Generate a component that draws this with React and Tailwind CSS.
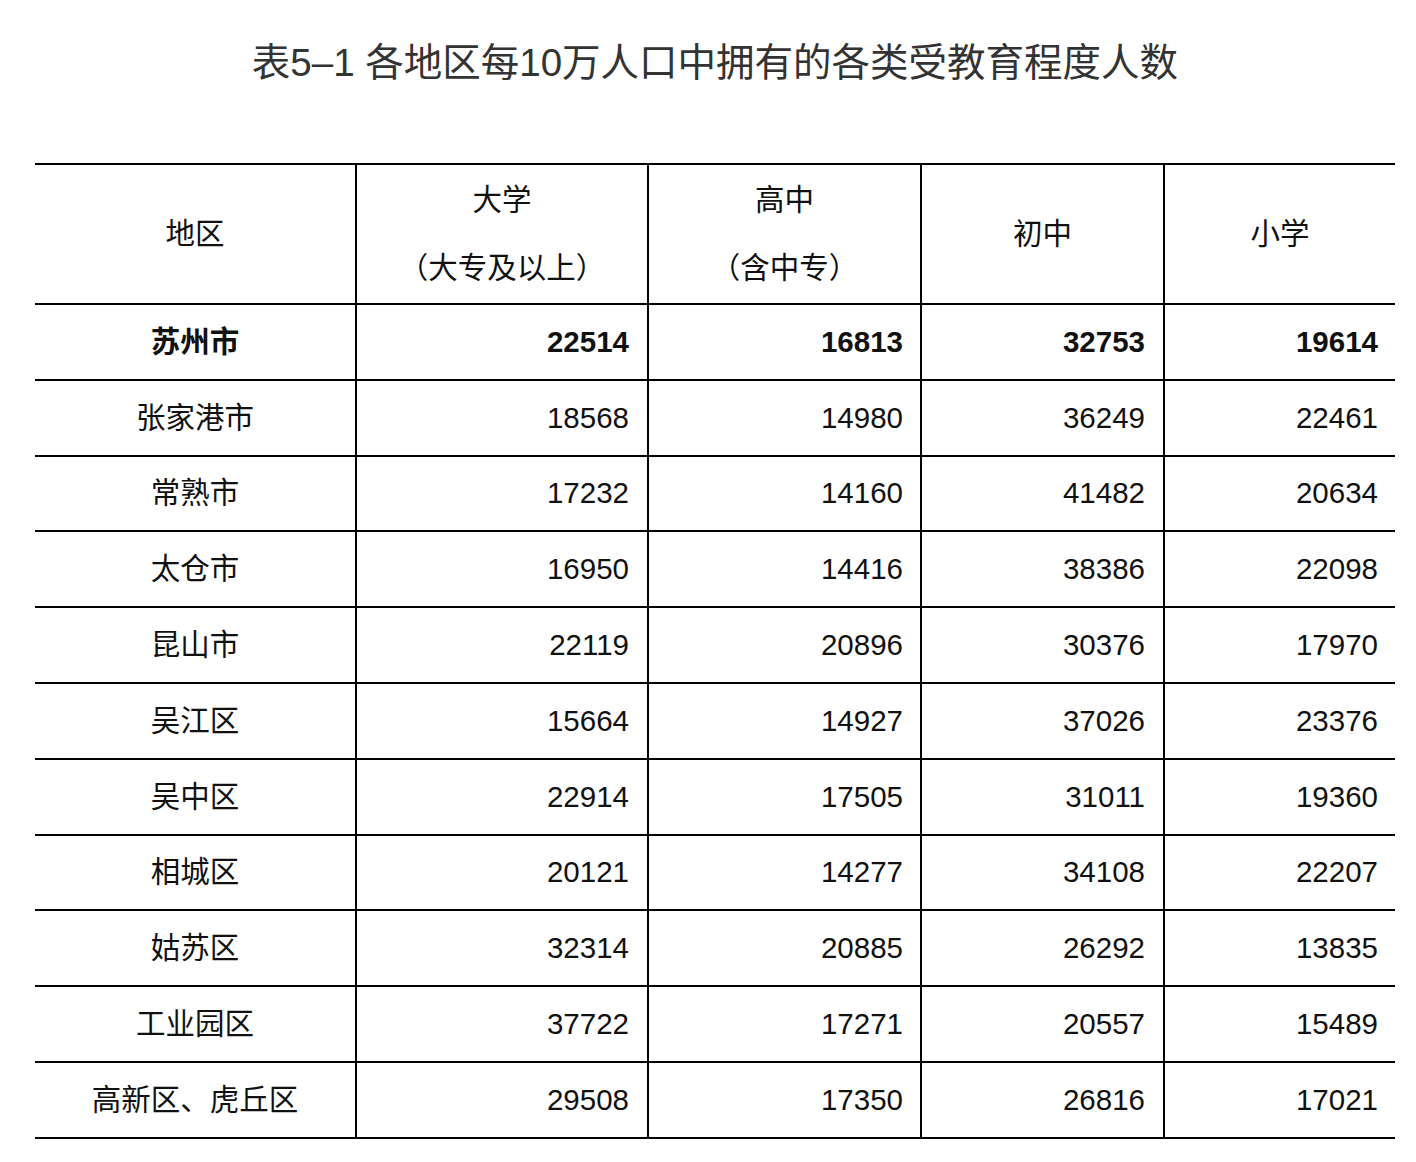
import React from 'react';

const rows = [
    ['苏州市', '22514', '16813', '32753', '19614', true],
    ['张家港市', '18568', '14980', '36249', '22461'],
    ['常熟市', '17232', '14160', '41482', '20634'],
    ['太仓市', '16950', '14416', '38386', '22098'],
    ['昆山市', '22119', '20896', '30376', '17970'],
    ['吴江区', '15664', '14927', '37026', '23376'],
    ['吴中区', '22914', '17505', '31011', '19360'],
    ['相城区', '20121', '14277', '34108', '22207'],
    ['姑苏区', '32314', '20885', '26292', '13835'],
    ['工业园区', '37722', '17271', '20557', '15489'],
    ['高新区、虎丘区', '29508', '17350', '26816', '17021'],
];

const font = { fontFamily: '"Liberation Sans", "Noto Sans CJK SC", sans-serif' };

export default function App() {
    return (
        <div className="min-h-[1162px] bg-white" style={font}>
            <div className="ml-[35px] w-[1360px]">
                <h1 className="pt-[38px] text-center text-[38.5px] leading-[50px] text-[#333]">
                    表5–1 各地区每10万人口中拥有的各类受教育程度人数
                </h1>

                <table className="mt-[75px] w-full border-collapse text-[29.5px] text-[#111]">
                    <colgroup>
                        <col className="w-[321px]" />
                        <col className="w-[292px]" />
                        <col className="w-[273px]" />
                        <col className="w-[243px]" />
                        <col className="w-[231px]" />
                    </colgroup>
                    <thead>
                        <tr className="h-[140px] border-t-2 border-b-2 border-black">
                            <th className="font-normal">地区</th>
                            <th className="border-l-2 border-black font-normal leading-[68px]">
                                大学<br />（大专及以上）
                            </th>
                            <th className="border-l-2 border-black font-normal leading-[68px]">
                                高中<br />（含中专）
                            </th>
                            <th className="border-l-2 border-black font-normal">初中</th>
                            <th className="border-l-2 border-black font-normal">小学</th>
                        </tr>
                    </thead>
                    <tbody>
                        {rows.map((r) => (
                            <tr key={r[0]} className={`h-[75.8px] border-b-2 border-black ${r[5] ? 'font-bold' : ''}`}>
                                <td className="text-center">{r[0]}</td>
                                <td className="border-l-2 border-black pr-[18px] text-right">{r[1]}</td>
                                <td className="border-l-2 border-black pr-[17px] text-right">{r[2]}</td>
                                <td className="border-l-2 border-black pr-[18px] text-right">{r[3]}</td>
                                <td className="border-l-2 border-black pr-[17px] text-right">{r[4]}</td>
                            </tr>
                        ))}
                    </tbody>
                </table>
            </div>
        </div>
    );
}
